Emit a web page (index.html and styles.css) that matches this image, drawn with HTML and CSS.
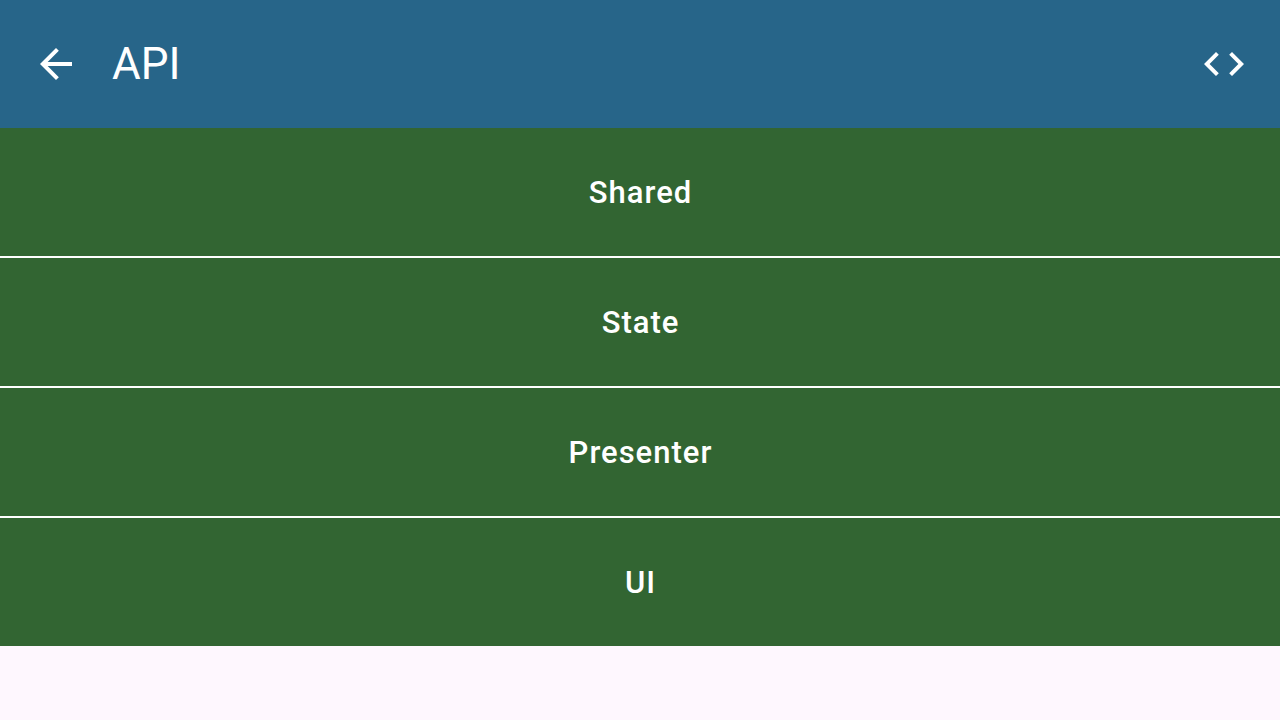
FILE: index.html
```html
<!DOCTYPE html>
<html>
<head>
<meta charset="utf-8">
<link rel="stylesheet" href="styles.css">
</head>
<body>
<header class="topbar">
  <button class="icon-btn" aria-label="Back">
    <svg viewBox="0 0 24 24" width="48" height="48"><path fill="#fff" d="M20 11H7.83l5.59-5.59L12 4l-8 8 8 8 1.41-1.41L7.83 13H20v-2z"/></svg>
  </button>
  <h1 class="title">API</h1>
  <button class="icon-btn end" aria-label="Code">
    <svg viewBox="0 0 24 24" width="48" height="48"><path fill="#fff" d="M9.4 16.6L4.8 12l4.6-4.6L8 6l-6 6 6 6 1.4-1.4zm5.2 0l4.6-4.6-4.6-4.6L16 6l6 6-6 6-1.4-1.4z"/></svg>
  </button>
</header>
<main class="list">
  <div class="item">Shared</div>
  <div class="item">State</div>
  <div class="item">Presenter</div>
  <div class="item">UI</div>
</main>
</body>
</html>
```
FILE: styles.css
```css
html, body {
  margin: 0;
  padding: 0;
  background: #fef7fe;
  font-family: Roboto, "Noto Sans", sans-serif;
}
.topbar {
  height: 128px;
  background: #276589;
  display: flex;
  align-items: center;
  padding: 0 32px;
  box-sizing: border-box;
}
.icon-btn {
  width: 48px;
  height: 48px;
  padding: 0;
  border: 0;
  background: none;
  display: flex;
}
.icon-btn.end {
  margin-left: auto;
}
.title {
  margin: 0 0 0 32px;
  color: #fff;
  font-size: 44px;
  font-weight: 400;
  line-height: 1;
}
.list {
  display: flex;
  flex-direction: column;
  gap: 2px;
  background: #fff;
}
.item {
  height: 128px;
  background: #326532;
  color: #fff;
  display: flex;
  align-items: center;
  justify-content: center;
  font-size: 31px;
  font-weight: 500;
  letter-spacing: 1px;
  padding-left: 1px;
}
```
